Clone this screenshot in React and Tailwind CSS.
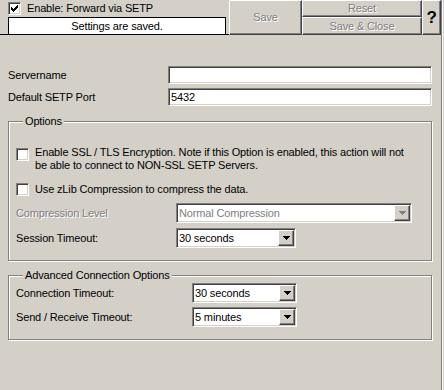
import React from 'react';

const raised =
  'border border-t-white border-l-white border-r-[#404040] border-b-[#404040] shadow-[inset_-1px_-1px_0_#808080]';
const sunken =
  'border border-t-[#808080] border-l-[#808080] border-r-white border-b-white shadow-[inset_1px_1px_0_#404040,inset_-1px_-1px_0_#d4d0c8]';
const disabledText = 'text-[#808080] [text-shadow:1px_1px_0_#fff]';

const CheckBox = ({ checked, className = '' }) => (
  <div className={`w-[13px] h-[13px] shrink-0 bg-white flex items-center justify-center ${sunken} ${className}`}>
    {checked && (
      <svg width="7" height="7" viewBox="0 0 7 7" shapeRendering="crispEdges">
        <path d="M0 2h1v3H0zM1 3h1v3H1zM2 4h1v3H2zM3 3h1v3H3zM4 2h1v3H4zM5 1h1v3H5zM6 0h1v3H6z" fill="#000" />
      </svg>
    )}
  </div>
);

const ComboBox = ({ value, width, disabled }) => (
  <div className={`h-[20px] bg-white flex items-center ${sunken} ${width}`}>
    <span className={`flex-1 pl-[2px] leading-[13px] ${disabled ? 'text-[#808080]' : 'text-black'}`}>{value}</span>
    <div className={`w-[16px] h-[16px] mr-[1px] bg-[#d4d0c8] flex items-center justify-center ${raised}`}>
      <svg width="7" height="4" viewBox="0 0 7 4" shapeRendering="crispEdges">
        <path d="M0 0h7v1H0zM1 1h5v1H1zM2 2h3v1H2zM3 3h1v1H3z" fill={disabled ? '#808080' : '#000'} />
      </svg>
    </div>
  </div>
);

const GroupBox = ({ title, className = '', children }) => (
  <div className={`border border-[#808080] shadow-[1px_1px_0_#fff,inset_1px_1px_0_#fff] ${className}`}>
    <div className="-mt-[7px] ml-[7px] px-[2px] w-fit bg-[#d4d0c8] leading-[13px]">{title}</div>
    {children}
  </div>
);

export default function App() {
  return (
    <div className="w-[444px] h-[390px] bg-[#d4d0c8] flex font-['Liberation_Sans',Arial,sans-serif] text-[11px] tracking-[-0.15px] text-black overflow-hidden">
      <div className="w-[442px] border-r border-[#808080] flex flex-col">
        {/* Top bar */}
        <div className="flex h-[35px]">
          <div className="w-[229px] flex flex-col border-b border-black">
            <div className="h-[17px] flex items-center pl-[8px] gap-[6px]">
              <CheckBox checked />
              <span className="leading-[13px]">Enable: Forward via SETP</span>
            </div>
            <div className="flex-1 ml-[8px] mr-[3px] bg-white border-t border-l border-r border-black flex items-center justify-center leading-[13px]">
              Settings are saved.
            </div>
          </div>
          <div className={`w-[73px] flex items-center justify-center ${raised} ${disabledText}`}>Save</div>
          <div className="w-[120px] flex flex-col">
            <div className={`h-[17px] flex items-center justify-center ${raised} ${disabledText}`}>Reset</div>
            <div className={`h-[18px] flex items-center justify-center ${raised} ${disabledText}`}>Save &amp; Close</div>
          </div>
          <div className={`w-[19px] flex items-center justify-center font-bold text-[17px] ${raised}`}>?</div>
        </div>

        {/* Content */}
        <div className="flex flex-col pl-[8px] pr-[9px]">
          <div className="mt-[31px] flex items-center">
            <span className="w-[160px]">Servername</span>
            <div className={`flex-1 h-[18px] bg-white ${sunken}`} />
          </div>
          <div className="mt-[4px] flex items-center">
            <span className="w-[160px]">Default SETP Port</span>
            <div className={`flex-1 h-[18px] bg-white flex items-center pl-[2px] leading-[13px] ${sunken}`}>5432</div>
          </div>

          <GroupBox title="Options" className="mt-[15px] pl-[7px] pb-[12px]">
            <div className="mt-[18px] flex gap-[6px]">
              <CheckBox className="mt-[2px]" />
              <span className="leading-[13px]">
                Enable SSL / TLS Encryption. Note if this Option is enabled, this action will not
                <br />
                be able to connect to NON-SSL SETP Servers.
              </span>
            </div>
            <div className="mt-[11px] flex items-center gap-[6px]">
              <CheckBox />
              <span className="leading-[13px]">Use zLib Compression to compress the data.</span>
            </div>
            <div className="mt-[7px] flex items-center">
              <span className={`w-[160px] ${disabledText}`}>Compression Level</span>
              <ComboBox value="Normal Compression" width="w-[236px]" disabled />
            </div>
            <div className="mt-[5px] flex items-center">
              <span className="w-[160px]">Session Timeout:</span>
              <ComboBox value="30 seconds" width="w-[120px]" />
            </div>
          </GroupBox>

          <GroupBox title="Advanced Connection Options" className="mt-[14px] pl-[7px] pb-[12px]">
            <div className="mt-[1px] flex items-center">
              <span className="w-[176px]">Connection Timeout:</span>
              <ComboBox value="30 seconds" width="w-[105px]" />
            </div>
            <div className="mt-[4px] flex items-center">
              <span className="w-[176px]">Send / Receive Timeout:</span>
              <ComboBox value="5 minutes" width="w-[105px]" />
            </div>
          </GroupBox>
        </div>
      </div>
      <div className="w-[2px] border-l border-white" />
    </div>
  );
}
